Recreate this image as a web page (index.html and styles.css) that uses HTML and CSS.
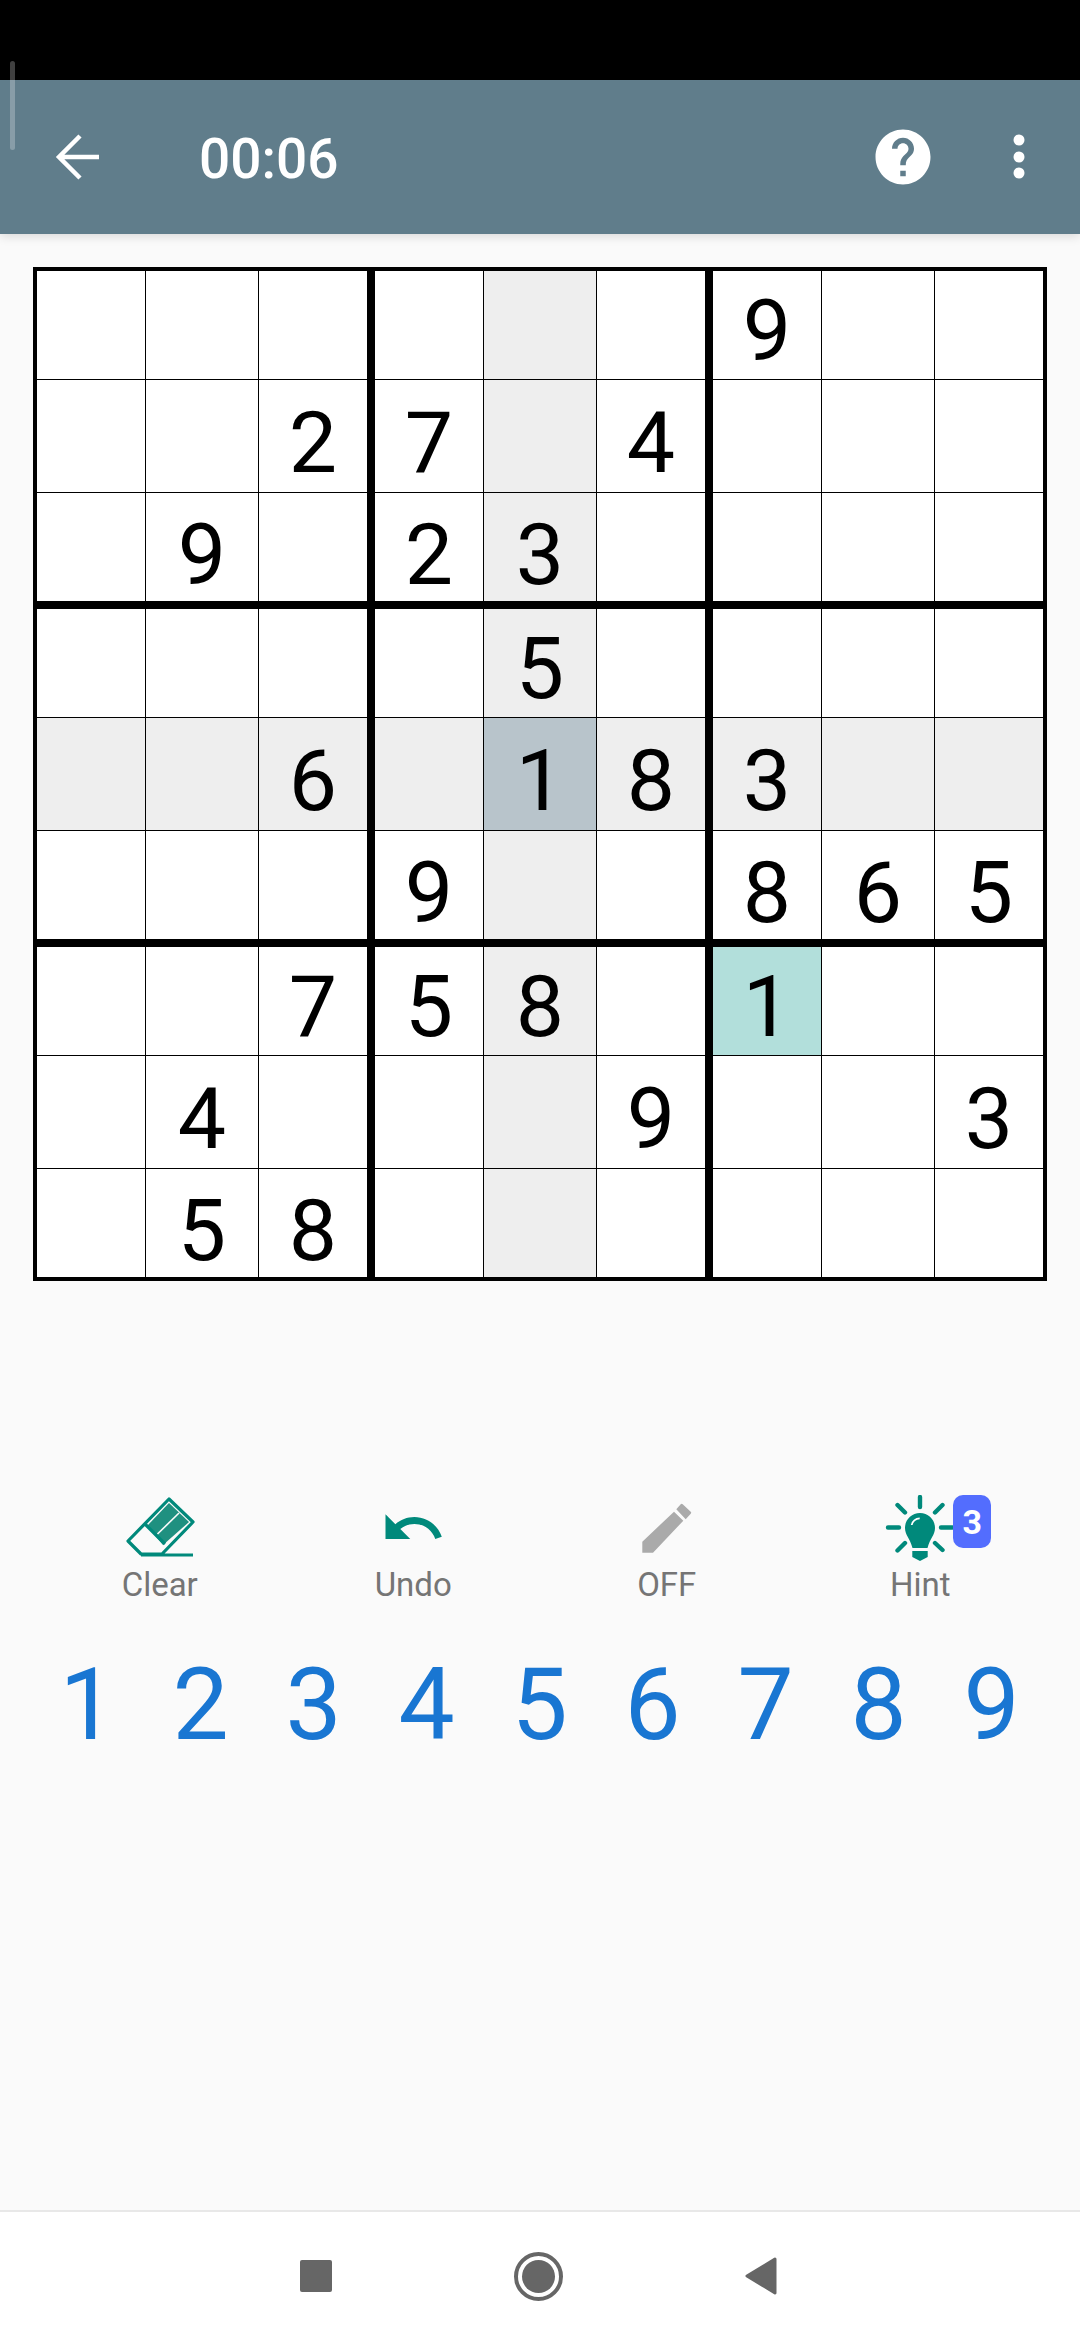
FILE: index.html
```html
<!DOCTYPE html>
<html>
<head>
    <meta charset="utf-8">
    <title>Sudoku</title>
    <link rel="stylesheet" href="styles.css">
</head>
<body>
    <div class="status-bar"></div>
    <div class="scroll-thumb"></div>

    <header class="toolbar">
        <svg class="ic-back" viewBox="0 0 48 48"><path d="M47 24H7M28 3 7 24l21 21" fill="none" stroke="#fff" stroke-width="4.5"/></svg>
        <span class="timer">00:06</span>
        <svg class="ic-help" viewBox="0 0 24 24"><path fill="#fff" d="M12 2C6.48 2 2 6.48 2 12s4.48 10 10 10 10-4.48 10-10S17.52 2 12 2zm1 17h-2v-2h2v2zm2.07-7.75l-.9.92C13.45 12.9 13 13.5 13 15h-2v-.5c0-1.1.45-2.1 1.17-2.83l1.24-1.26c.37-.36.59-.86.59-1.41 0-1.1-.9-2-2-2s-2 .9-2 2H8c0-2.21 1.79-4 4-4s4 1.79 4 4c0 .88-.36 1.68-.93 2.25z"/></svg>
        <svg class="ic-more" viewBox="0 0 24 48"><circle cx="12" cy="7" r="5.5" fill="#fff"/><circle cx="12" cy="24" r="5.5" fill="#fff"/><circle cx="12" cy="40" r="5.5" fill="#fff"/></svg>
    </header>

    <div class="board">
        <div class="box">
            <div class="cell"></div><div class="cell"></div><div class="cell"></div>
            <div class="cell"></div><div class="cell"></div><div class="cell">2</div>
            <div class="cell"></div><div class="cell">9</div><div class="cell"></div>
        </div>
        <div class="box">
            <div class="cell"></div><div class="cell hl"></div><div class="cell"></div>
            <div class="cell">7</div><div class="cell hl"></div><div class="cell">4</div>
            <div class="cell">2</div><div class="cell hl">3</div><div class="cell"></div>
        </div>
        <div class="box">
            <div class="cell">9</div><div class="cell"></div><div class="cell"></div>
            <div class="cell"></div><div class="cell"></div><div class="cell"></div>
            <div class="cell"></div><div class="cell"></div><div class="cell"></div>
        </div>
        <div class="box">
            <div class="cell"></div><div class="cell"></div><div class="cell"></div>
            <div class="cell hl"></div><div class="cell hl"></div><div class="cell hl">6</div>
            <div class="cell"></div><div class="cell"></div><div class="cell"></div>
        </div>
        <div class="box">
            <div class="cell"></div><div class="cell hl">5</div><div class="cell"></div>
            <div class="cell hl"></div><div class="cell selected">1</div><div class="cell hl">8</div>
            <div class="cell">9</div><div class="cell hl"></div><div class="cell"></div>
        </div>
        <div class="box">
            <div class="cell"></div><div class="cell"></div><div class="cell"></div>
            <div class="cell hl">3</div><div class="cell hl"></div><div class="cell hl"></div>
            <div class="cell">8</div><div class="cell">6</div><div class="cell">5</div>
        </div>
        <div class="box">
            <div class="cell"></div><div class="cell"></div><div class="cell">7</div>
            <div class="cell"></div><div class="cell">4</div><div class="cell"></div>
            <div class="cell"></div><div class="cell">5</div><div class="cell">8</div>
        </div>
        <div class="box">
            <div class="cell">5</div><div class="cell hl">8</div><div class="cell"></div>
            <div class="cell"></div><div class="cell hl"></div><div class="cell">9</div>
            <div class="cell"></div><div class="cell hl"></div><div class="cell"></div>
        </div>
        <div class="box">
            <div class="cell same">1</div><div class="cell"></div><div class="cell"></div>
            <div class="cell"></div><div class="cell"></div><div class="cell">3</div>
            <div class="cell"></div><div class="cell"></div><div class="cell"></div>
        </div>
    </div>

    <div class="tools">
        <div class="tool">
            <svg class="tool-icon" viewBox="0 0 72 66">
                <path d="M39 50 23 31 45 8l20 19z" fill="#1f9080"/>
                <path d="M45 4l24 23-31 32H17L4 46zM21 29l20 20M17 60h52" fill="none" stroke="#00897b" stroke-width="3.2" stroke-linejoin="round"/>
                <path d="M33.5 39 55 18" stroke="#fafafa" stroke-width="1.6"/>
            </svg>
            <span class="tool-label">Clear</span>
        </div>
        <div class="tool">
            <svg class="tool-icon" viewBox="-3 0 72 66"><path transform="scale(2.75)" fill="#00897b" d="M12.5 8c-2.65 0-5.05.99-6.9 2.6L2 7v9h9l-3.62-3.62c1.39-1.16 3.16-1.88 5.12-1.88 3.54 0 6.55 2.31 7.6 5.5l2.37-.78C21.08 11.03 17.15 8 12.5 8z"/></svg>
            <span class="tool-label">Undo</span>
        </div>
        <div class="tool">
            <svg class="tool-icon" viewBox="-3 0 72 66">
                <path fill="#aaa" d="M8.3 46.7v11H19l30.3-32-9.3-9zM42.3 14.3l4.4-5q1-1 2 0l8 7.4q1 1 0 2l-5 5.6z"/>
            </svg>
            <span class="tool-label">OFF</span>
        </div>
        <div class="tool">
            <svg class="tool-icon" viewBox="0 0 72 66">
                <path d="M36 2v10M4 32.500h11M57 32.500h11.500M13.500 10l7.500 7.500M58.500 10 51 17.500M13.500 55.500 21 48M58.500 55 51 48" stroke="#00897b" stroke-width="4.400" stroke-linecap="round" fill="none"/>
                <path fill="#00897b" d="M36 18c8.500 0 15 6.700 15 15 0 7-5 10.500-7.500 20h-15C26 43.500 21 40 21 33c0-8.300 6.500-15 15-15zM28.300 56h15.400v6L36 66l-7.700-4z"/>
                <path d="M27.700 30c.4-3.500 4-6.700 8-6.700" stroke="#fff" stroke-width="1.800" fill="none"/>
            </svg>
            <span class="badge">3</span>
            <span class="tool-label">Hint</span>
        </div>
    </div>

    <div class="numbers">
        <span>1</span><span>2</span><span>3</span><span>4</span><span>5</span><span>6</span><span>7</span><span>8</span><span>9</span>
    </div>

    <nav class="navbar">
        <svg class="nav-square" viewBox="0 0 32 32"><rect width="32" height="32" rx="2" fill="#666"/></svg>
        <svg class="nav-home" viewBox="0 0 49 49"><circle cx="24.500" cy="24.500" r="22.500" fill="none" stroke="#666" stroke-width="4"/><circle cx="24.500" cy="24.500" r="16.500" fill="#666"/></svg>
        <svg class="nav-back" viewBox="0 0 32 38"><path d="M30 2 2 19l28 17z" fill="#666" stroke="#666" stroke-width="3" stroke-linejoin="round"/></svg>
    </nav>
</body>
</html>
```

FILE: styles.css
```css
* {
    box-sizing: border-box;
}

html, body {
    margin: 0;
    height: 100%;
}

body {
    width: 1080px;
    height: 2340px;
    display: flex;
    flex-direction: column;
    background: #fafafa;
    font-family: Roboto, "Liberation Sans", sans-serif;
    overflow: hidden;
}

.status-bar {
    height: 80px;
    background: #000;
}

/* leftover scroll thumb that sits over the status bar and toolbar */
.scroll-thumb {
    position: absolute;
    left: 10px;
    top: 61px;
    width: 5px;
    height: 89px;
    border-radius: 3px;
    background: rgba(255, 255, 255, 0.25);
    z-index: 5;
}

.toolbar {
    position: relative;
    height: 154px;
    display: flex;
    align-items: center;
    padding-left: 52px;
    background: #607d8b;
    box-shadow: 0 2px 10px rgba(0, 0, 0, 0.14);
}

.ic-back {
    width: 48px;
    height: 48px;
}

.timer {
    margin-left: 99px;
    margin-top: 4px;
    color: #fff;
    font-size: 55px;
    font-weight: 500;
}

.ic-help {
    width: 66px;
    height: 66px;
    margin-left: auto;
}

.ic-more {
    width: 24px;
    height: 48px;
    margin-left: 71px;
    margin-right: 49px;
}

/* board: 3 x 3 boxes split by thick lines, each box has 3 x 3 cells */
.board {
    width: 1014px;
    height: 1014px;
    margin: 33px 0 0 33px;
    display: grid;
    grid-template-columns: repeat(3, 330px);
    grid-template-rows: repeat(3, 330px);
    gap: 8px;
    border: 4px solid #000;
    background: #000;
}

.box {
    display: grid;
    grid-template-columns: 108px 112px 108px;
    grid-template-rows: 108px 112px 108px;
    gap: 1px;
    background: #000;
}

.cell {
    display: flex;
    align-items: center;
    justify-content: center;
    padding-top: 11px;
    background: #fff;
    color: #000;
    font-size: 86px;
    line-height: 1;
}

/* digits sit a little lower in the second and third row of a box */
.cell:nth-child(n+4) {
    padding-top: 13px;
}

.cell:nth-child(n+7) {
    padding-top: 15px;
}

.cell.hl {
    background: #eee;
}

.cell.selected {
    background: #b8c4cb;
}

.cell.same {
    background: #b2dfdb;
}

.tools {
    display: grid;
    grid-template-columns: repeat(4, 253.5px);
    margin: 214px 0 0 33px;
}

.tool {
    position: relative;
    display: flex;
    flex-direction: column;
    align-items: center;
}

.tool-icon {
    width: 72px;
    height: 66px;
}

.tool-label {
    margin-top: 4px;
    color: #757575;
    font-size: 33px;
    line-height: 40px;
}

.badge {
    position: absolute;
    left: calc(50% + 33px);
    top: 0;
    width: 38px;
    height: 53px;
    display: flex;
    align-items: center;
    justify-content: center;
    border-radius: 10px;
    background: #536dfe;
    color: #fff;
    font-size: 34px;
    font-weight: 700;
}

.numbers {
    display: grid;
    grid-template-columns: repeat(9, 113px);
    margin: 50px 0 0 31px;
    color: #1976d2;
    font-size: 100px;
    line-height: 100px;
    text-align: center;
}

.navbar {
    margin-top: auto;
    height: 130px;
    display: flex;
    align-items: center;
    justify-content: center;
    gap: 182px;
    padding-right: 4px;
    background: #fff;
    border-top: 2px solid #e8e8e8;
}

.nav-square {
    width: 32px;
    height: 32px;
}

.nav-home {
    width: 49px;
    height: 49px;
}

.nav-back {
    width: 32px;
    height: 38px;
}
```
